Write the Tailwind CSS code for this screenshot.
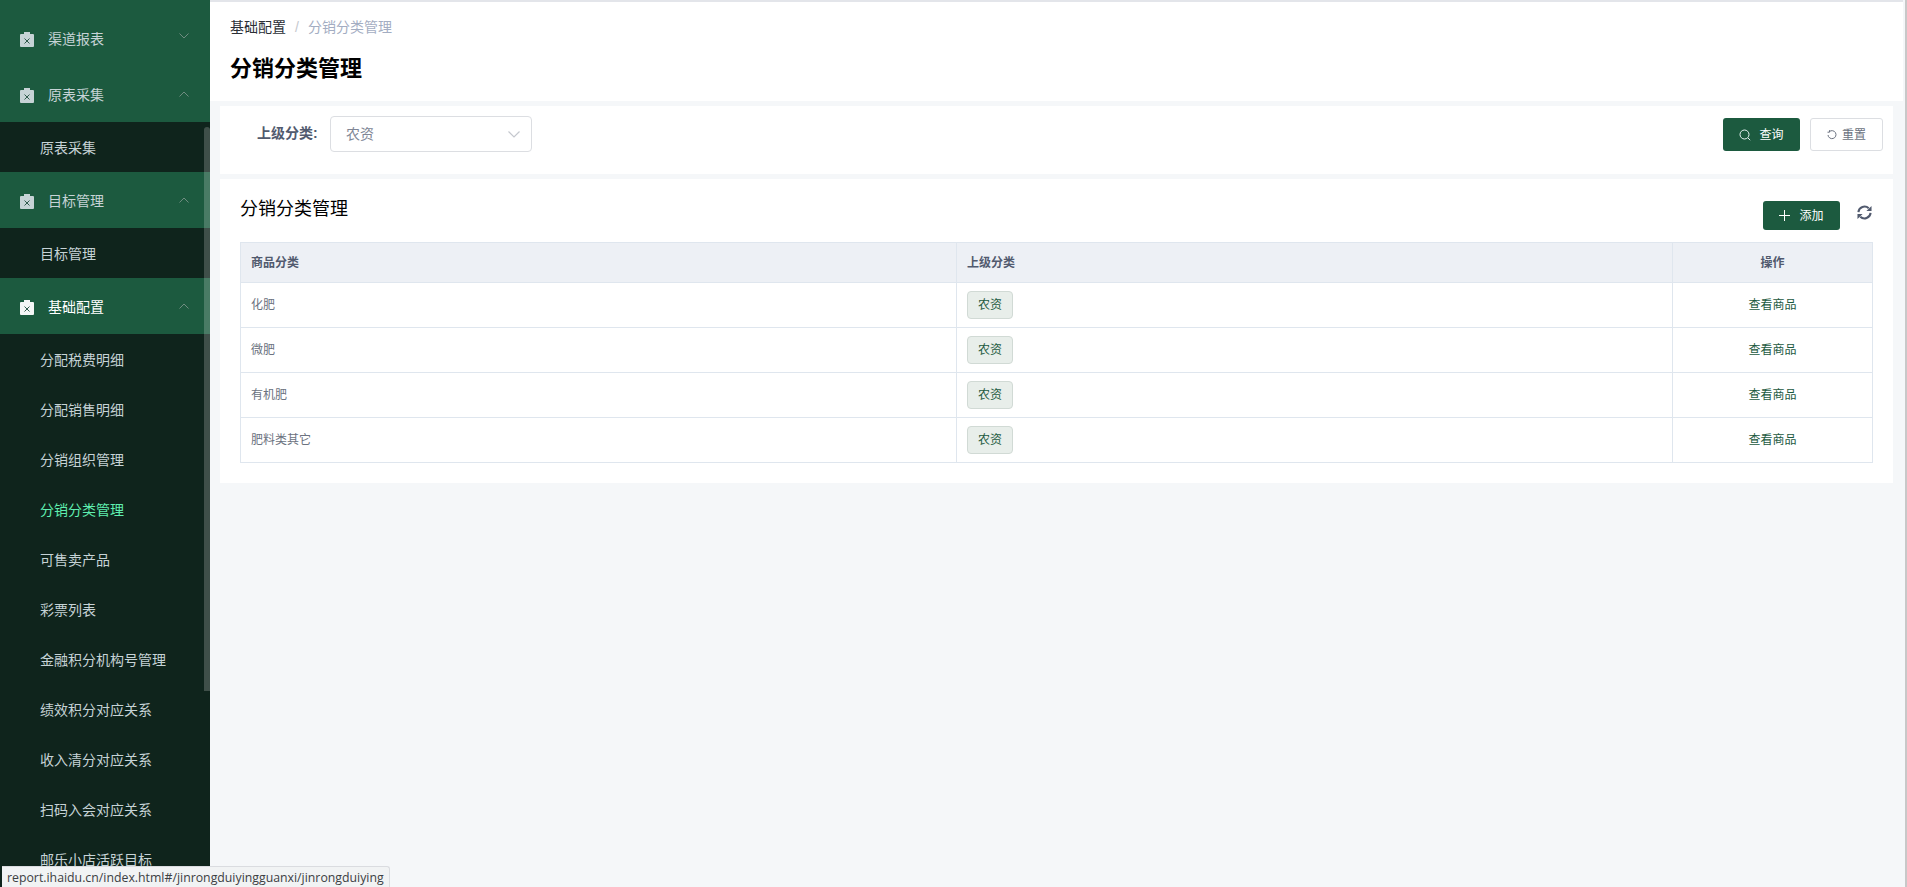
<!DOCTYPE html>
<html lang="zh-CN">
<head>
    <meta charset="UTF-8">
    <title>分销分类管理</title>
    <script src="https://cdn.jsdelivr.net/npm/@tailwindcss/browser@4"></script>
</head>
<body class="relative h-screen overflow-hidden flex bg-[#f5f7f9] text-[#515a6e] font-['Liberation_Sans','Noto_Sans_CJK_SC',sans-serif]">

    <!-- Sidebar -->
    <aside class="relative w-[210px] shrink-0 h-full overflow-hidden bg-[#0f241c] text-sm text-[#c6d3d6] pt-[10px] shadow-[inset_0_10px_0_#1c5a3f]">
        <div class="h-14 bg-[#1c5a3f] flex items-center pl-5 pr-[21px] pt-[2px]">
            <svg class="w-[14px] h-[15px] mr-[14px]" viewBox="0 0 14 15"><rect y="2" width="14" height="13" rx="1" fill="#c6d3d6"/><rect x="4" width="6" height="3" fill="#c6d3d6"/><path fill="none" stroke="#2f5a4c" d="M4.500 6.500l5 5M9.500 6.500l-5 5"/></svg>
            <span class="flex-1">渠道报表</span>
            <svg class="w-[10px] h-[6px] mb-[6px]" viewBox="0 0 10 6" fill="none" stroke="#6f8c80"><path d="M.5.500 5 5 9.500.5"/></svg>
        </div>
        <div class="h-14 bg-[#1c5a3f] flex items-center pl-5 pr-[21px] pt-[2px]">
            <svg class="w-[14px] h-[15px] mr-[14px]" viewBox="0 0 14 15"><rect y="2" width="14" height="13" rx="1" fill="#c6d3d6"/><rect x="4" width="6" height="3" fill="#c6d3d6"/><path fill="none" stroke="#2f5a4c" d="M4.500 6.500l5 5M9.500 6.500l-5 5"/></svg>
            <span class="flex-1">原表采集</span>
            <svg class="w-[10px] h-[6px] mb-[3px]" viewBox="0 0 10 6" fill="none" stroke="#6f8c80"><path d="M.5 5.500 5 1l4.500 4.500"/></svg>
        </div>
        <div class="h-[50px] flex items-center pl-10 pt-[2px]">原表采集</div>
        <div class="h-14 bg-[#1c5a3f] flex items-center pl-5 pr-[21px] pt-[2px]">
            <svg class="w-[14px] h-[15px] mr-[14px]" viewBox="0 0 14 15"><rect y="2" width="14" height="13" rx="1" fill="#c6d3d6"/><rect x="4" width="6" height="3" fill="#c6d3d6"/><path fill="none" stroke="#2f5a4c" d="M4.500 6.500l5 5M9.500 6.500l-5 5"/></svg>
            <span class="flex-1">目标管理</span>
            <svg class="w-[10px] h-[6px] mb-[3px]" viewBox="0 0 10 6" fill="none" stroke="#6f8c80"><path d="M.5 5.500 5 1l4.500 4.500"/></svg>
        </div>
        <div class="h-[50px] flex items-center pl-10 pt-[2px]">目标管理</div>
        <div class="h-14 bg-[#1c5a3f] flex items-center pl-5 pr-[21px] pt-[2px] text-white">
            <svg class="w-[14px] h-[15px] mr-[14px]" viewBox="0 0 14 15"><rect y="2" width="14" height="13" rx="1" fill="#f4f6f6"/><rect x="4" width="6" height="3" fill="#f4f6f6"/><path fill="none" stroke="#2f5a4c" d="M4.500 6.500l5 5M9.500 6.500l-5 5"/></svg>
            <span class="flex-1">基础配置</span>
            <svg class="w-[10px] h-[6px] mb-[3px]" viewBox="0 0 10 6" fill="none" stroke="#6f8c80"><path d="M.5 5.500 5 1l4.500 4.500"/></svg>
        </div>
        <div class="h-[50px] flex items-center pl-10 pt-[2px]">分配税费明细</div>
        <div class="h-[50px] flex items-center pl-10 pt-[2px]">分配销售明细</div>
        <div class="h-[50px] flex items-center pl-10 pt-[2px]">分销组织管理</div>
        <div class="h-[50px] flex items-center pl-10 pt-[2px] text-[#5fefb0]">分销分类管理</div>
        <div class="h-[50px] flex items-center pl-10 pt-[2px]">可售卖产品</div>
        <div class="h-[50px] flex items-center pl-10 pt-[2px]">彩票列表</div>
        <div class="h-[50px] flex items-center pl-10 pt-[2px]">金融积分机构号管理</div>
        <div class="h-[50px] flex items-center pl-10 pt-[2px]">绩效积分对应关系</div>
        <div class="h-[50px] flex items-center pl-10 pt-[2px]">收入清分对应关系</div>
        <div class="h-[50px] flex items-center pl-10 pt-[2px]">扫码入会对应关系</div>
        <div class="h-[50px] flex items-center pl-10 pt-[2px]">邮乐小店活跃目标</div>
        <!-- scrollbar overlay -->
        <div class="absolute right-0 top-[127px] w-[6px] h-[564px] rounded-t-[3px] bg-white/20"></div>
    </aside>

    <!-- Main -->
    <main class="flex-1 min-w-0 flex flex-col pr-[12px]">
        <div class="-mr-[10px] h-[101px] bg-white border-t-2 border-[#e3e5ea] pl-[20px] pt-[17px] shrink-0">
            <div class="text-sm leading-[17px]"><span class="text-[#2b2f36]">基础配置</span><span class="mx-[9px] text-[#c5c8ce]">/</span><span class="text-[#a3adc2]">分销分类管理</span></div>
            <h1 class="mt-[19px] text-[22px] leading-7 font-bold text-black">分销分类管理</h1>
        </div>

        <!-- Filter -->
        <div class="ml-[10px] mt-[5px] h-[68px] bg-white flex items-start pt-[10px] pl-[37px] pr-[10px] shrink-0">
            <label class="w-[73px] text-sm leading-[34px] font-bold whitespace-nowrap">上级分类:</label>
            <div class="w-[202px] h-9 border border-[#dcdee2] rounded-[4px] flex items-center pl-[15px] pr-[11px] text-sm text-[#808695]">
                <span class="flex-1">农资</span>
                <svg class="w-[12px] h-[7px]" viewBox="0 0 12 7" fill="none" stroke="#c5c8ce" stroke-width="1.200"><path d="M.5.500 6 6l5.500-5.500"/></svg>
            </div>
            <div class="ml-auto mt-[2px] flex items-center gap-[10px]">
                <button class="w-[77px] h-[33px] bg-[#1c5a3f] rounded-[3px] text-white text-xs flex items-center justify-center gap-[8px]">
                    <svg class="w-3 h-3" viewBox="0 0 12 12" fill="none" stroke="#e8f4f4" stroke-width="1"><circle cx="5.500" cy="5.500" r="4.500"/><path d="M9 9l2.200 2.200"/></svg>
                    查询
                </button>
                <button class="w-[73px] h-[33px] bg-white border border-[#dcdee2] rounded-[3px] text-[#6b7280] text-xs flex items-center justify-center gap-[5px]">
                    <svg class="w-[10px] h-[10px]" viewBox="0 0 10 10" fill="none" stroke="#6b7280"><path d="M2.400 1.600A4 4 0 1 1 1 5M2.500.2v2h-2"/></svg>
                    重置
                </button>
            </div>
        </div>

        <!-- Table card -->
        <div class="ml-[10px] mt-[5px] h-[304px] bg-white px-5 pt-[20px] shrink-0">
            <div class="flex items-start h-[43px]">
                <h2 class="flex-1 text-lg leading-[20px] text-black">分销分类管理</h2>
                <button class="w-[77px] h-[29px] mt-[2px] bg-[#1c5a3f] rounded-[3px] text-white text-xs flex items-center justify-center gap-[9px]">
                    <svg class="w-[11px] h-[11px]" viewBox="0 0 11 11" stroke="#fff"><path d="M5.500 0v11M0 5.500h11"/></svg>
                    添加
                </button>
                <svg class="w-[15px] h-[15px] mt-[6px] ml-[17px] mr-[1px]" viewBox="0 0 16 16"><g fill="none" stroke="#515a6e" stroke-width="2.200"><path d="M1.500 7.500A6.500 6.500 0 0 1 12.500 3.500"/><path d="M14.500 8.500A6.500 6.500 0 0 1 3.500 12.500"/></g><path fill="#515a6e" d="M15.500 1v5.500H10zM.5 15V9.500H6z"/></svg>
            </div>
            <table class="w-full table-fixed border-collapse text-xs">
                <thead>
                    <tr class="h-[40px] bg-[#edf0f5] text-[#515a6e]">
                        <th class="w-[716px] border border-[#dfe6ee] pl-[10px] text-left font-bold">商品分类</th>
                        <th class="w-[716px] border border-[#dfe6ee] pl-[10px] text-left font-bold">上级分类</th>
                        <th class="border border-[#dfe6ee] text-center font-bold">操作</th>
                    </tr>
                </thead>
                <tbody>
                    <tr class="h-[45px]">
                        <td class="border border-[#dfe6ee] pl-[10px] text-[#6b7280]">化肥</td>
                        <td class="border border-[#dfe6ee] pl-[10px]"><span class="inline-block align-middle w-[46px] h-[28px] leading-[26px] text-center bg-[#e8eeea] border border-[#d1dad5] rounded-[4px] text-[#1c5a3f]">农资</span></td>
                        <td class="border border-[#dfe6ee] text-center text-[#1c5a3f]">查看商品</td>
                    </tr>
                    <tr class="h-[45px]">
                        <td class="border border-[#dfe6ee] pl-[10px] text-[#6b7280]">微肥</td>
                        <td class="border border-[#dfe6ee] pl-[10px]"><span class="inline-block align-middle w-[46px] h-[28px] leading-[26px] text-center bg-[#e8eeea] border border-[#d1dad5] rounded-[4px] text-[#1c5a3f]">农资</span></td>
                        <td class="border border-[#dfe6ee] text-center text-[#1c5a3f]">查看商品</td>
                    </tr>
                    <tr class="h-[45px]">
                        <td class="border border-[#dfe6ee] pl-[10px] text-[#6b7280]">有机肥</td>
                        <td class="border border-[#dfe6ee] pl-[10px]"><span class="inline-block align-middle w-[46px] h-[28px] leading-[26px] text-center bg-[#e8eeea] border border-[#d1dad5] rounded-[4px] text-[#1c5a3f]">农资</span></td>
                        <td class="border border-[#dfe6ee] text-center text-[#1c5a3f]">查看商品</td>
                    </tr>
                    <tr class="h-[45px]">
                        <td class="border border-[#dfe6ee] pl-[10px] text-[#6b7280]">肥料类其它</td>
                        <td class="border border-[#dfe6ee] pl-[10px]"><span class="inline-block align-middle w-[46px] h-[28px] leading-[26px] text-center bg-[#e8eeea] border border-[#d1dad5] rounded-[4px] text-[#1c5a3f]">农资</span></td>
                        <td class="border border-[#dfe6ee] text-center text-[#1c5a3f]">查看商品</td>
                    </tr>
                </tbody>
            </table>
        </div>
    </main>
    <!-- window edge -->
    <div class="w-[2px] shrink-0 bg-[#c8c8c8]"></div>

    <!-- Browser link status bubble -->
    <div class="absolute left-[2px] bottom-0 h-[21px] w-[388px] pl-[5px] bg-[#f1f3f4] border-t border-r border-[#dadce0] rounded-tr-[3px] text-[12.3px] leading-[21px] text-[#3c4043] font-['Open_Sans',sans-serif] whitespace-nowrap">report.ihaidu.cn/index.html#/jinrongduiyingguanxi/jinrongduiying</div>
</body>
</html>
